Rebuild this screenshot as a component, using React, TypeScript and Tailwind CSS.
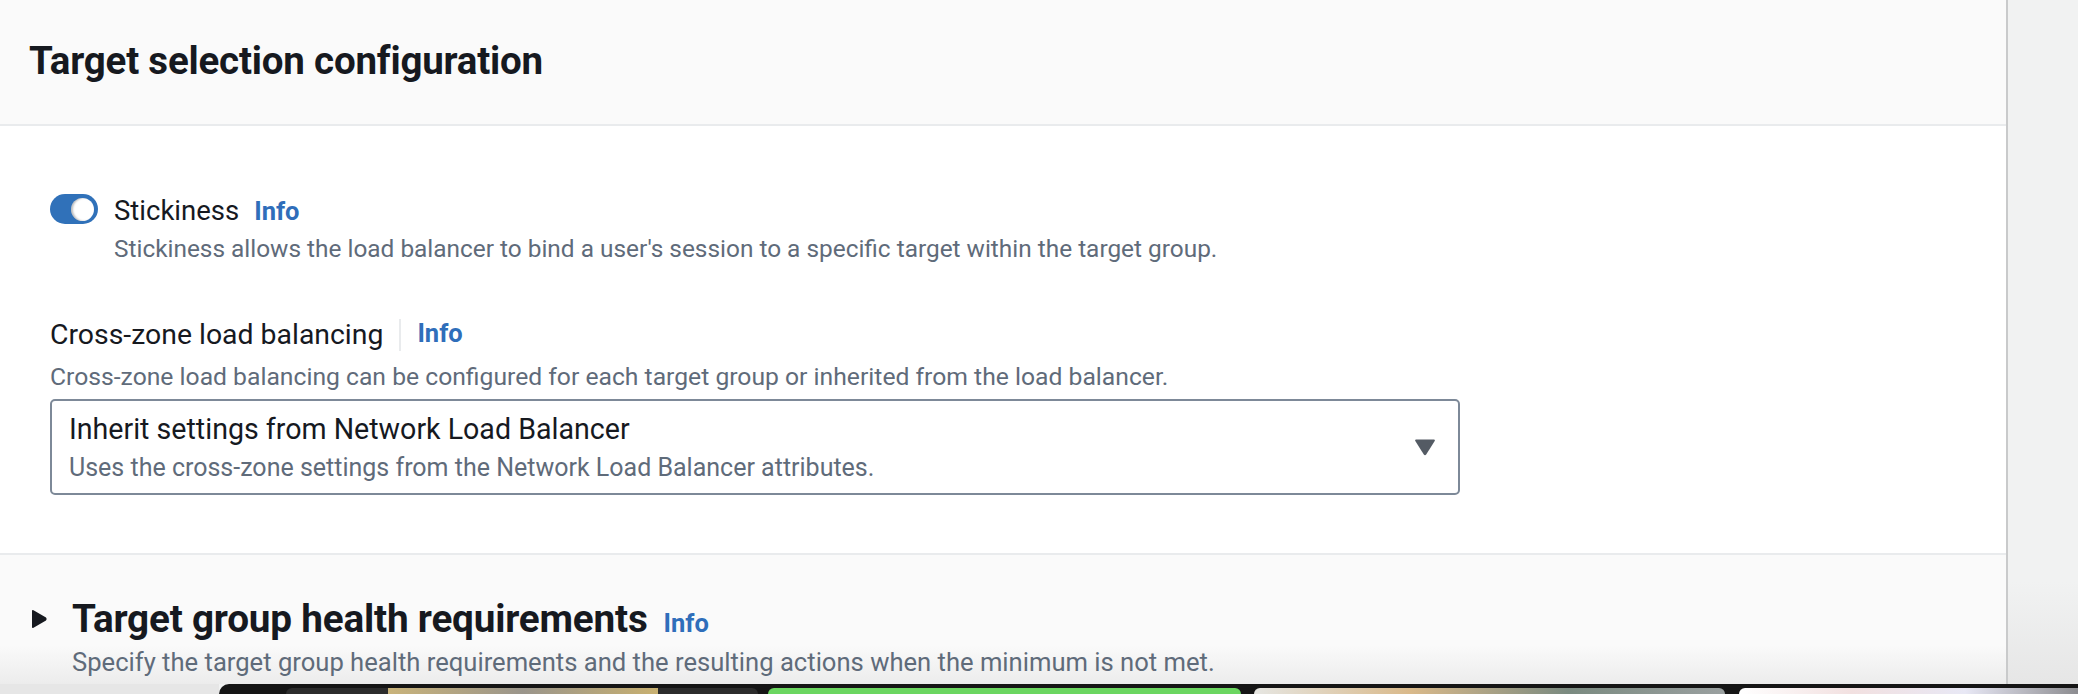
import React from "react";

function Info() {
  return <span className="font-bold text-[25.5px] text-[#2f6eba] leading-none">Info</span>;
}

export default function App() {
  return (
    <div className="w-[2078px] h-[694px] overflow-hidden flex flex-col bg-[#f1f2f2] [font-family:Roboto,sans-serif]">
      <div className="flex flex-1 min-h-0">
        <div className="w-[2008px] flex flex-col border-r-2 border-[#c9cacb]">
          {/* header */}
          <div className="h-[126px] bg-[#fafafa] flex items-center pl-[29px] pb-[2px] border-b-2 border-[#e9ebed]">
            <h2 className="text-[38.5px] font-bold text-[#16191f] tracking-[-0.2px]">Target selection configuration</h2>
          </div>
          {/* content */}
          <div className="h-[429px] bg-white border-b-2 border-[#e9ebed] pl-[50px] pt-[69px]">
            <div className="flex items-start">
              <div className="mt-[-1px] w-[48px] h-[30px] rounded-full bg-[#3071b9] flex items-center justify-end pr-[4px]">
                <div className="w-[23px] h-[23px] rounded-full bg-white shadow-[inset_2px_0_2px_rgba(0,0,0,0.25)]" />
              </div>
              <div className="ml-[16px] flex flex-col">
                <div className="flex items-baseline gap-[15px] leading-[32px]">
                  <span className="text-[27.5px] text-[#16191f]">Stickiness</span>
                  <Info />
                </div>
                <div className="mt-[6px] text-[24.4px] leading-[32px] text-[#5f6b7a]">
                  Stickiness allows the load balancer to bind a user's session to a specific target within the target group.
                </div>
              </div>
            </div>
            <div className="mt-[52px] flex items-center leading-[32px]">
              <span className="text-[28.4px] text-[#16191f]">Cross-zone load balancing</span>
              <span className="ml-[16px] w-[2px] h-[32px] bg-[#e9ebed]" />
              <span className="ml-[16px] pt-[4px]"><Info /></span>
            </div>
            <div className="mt-[8px] text-[24.7px] leading-[32px] text-[#5f6b7a]">
              Cross-zone load balancing can be configured for each target group or inherited from the load balancer.
            </div>
            <div className="mt-[6px] w-[1410px] h-[96px] border-2 border-[#7d8998] rounded-[5px] flex items-center pl-[17px] pr-[20px]">
              <div className="flex-1 flex flex-col">
                <div className="text-[28.6px] leading-[32px] text-[#16191f]">Inherit settings from Network Load Balancer</div>
                <div className="mt-[9px] text-[25px] leading-[28px] text-[#5f6b7a]">
                  Uses the cross-zone settings from the Network Load Balancer attributes.
                </div>
              </div>
              <svg width="22" height="18" viewBox="0 0 22 18" className="mr-[2px]">
                <path d="M2 1.5 H20 Q21.5 1.5 20.7 3 L12.2 16.5 Q11 18 9.8 16.5 L1.3 3 Q0.5 1.5 2 1.5 Z" fill="#545b64" />
              </svg>
            </div>
          </div>
          {/* lower section */}
          <div className="flex-1 bg-[linear-gradient(to_bottom,#fafafa_70%,#ececec)] pl-[31px] pt-[35px]">
            <div className="flex items-center">
              <svg width="17" height="20" viewBox="0 0 17 20">
                <path d="M1 2 Q1 0.3 2.5 1.2 L15 8.6 Q16.4 10 15 11.4 L2.5 18.8 Q1 19.7 1 18 Z" fill="#16191f" />
              </svg>
              <div className="ml-[24px] flex items-baseline">
                <span className="text-[38.7px] font-bold text-[#16191f] tracking-[-0.2px]">Target group health requirements</span>
                <span className="ml-[16px]"><Info /></span>
              </div>
            </div>
            <div className="ml-[41px] mt-0 text-[25.6px] leading-[28px] text-[#5f6b7a]">
              Specify the target group health requirements and the resulting actions when the minimum is not met.
            </div>
          </div>
        </div>
        <div className="flex-1 bg-[linear-gradient(to_bottom,#f1f2f2_85%,#e6e6e6)]" />
      </div>
      {/* bottom dock strip */}
      <div className="h-[10px] flex shrink-0">
        <div className="w-[219px] bg-[#e6e6e6]" />
        <div className="flex-1 bg-[#151515] rounded-tl-[10px] flex items-end pl-[67px]">
          <div className="w-[472px] h-[6px] bg-[#2c2c2c] rounded-t-[8px] pl-[102px] flex">
            <div className="w-[270px] h-full bg-[linear-gradient(to_right,#c9b37a,#9a958b,#c8b070)]" />
          </div>
          <div className="ml-[10px] w-[473px] h-[6px] bg-[#6bd660] rounded-t-[8px]" />
          <div className="ml-[13px] w-[471px] h-[6px] rounded-t-[8px] bg-[linear-gradient(to_right,#e6e6e2,#d9b98a,#7a8a80,#9aa0a0)]" />
          <div className="ml-[14px] flex-1 h-[6px] rounded-tl-[8px] bg-[linear-gradient(to_right,#ffffff,#f2e0e0,#e8e8f5,#8c8c90)]" />
        </div>
      </div>
    </div>
  );
}
